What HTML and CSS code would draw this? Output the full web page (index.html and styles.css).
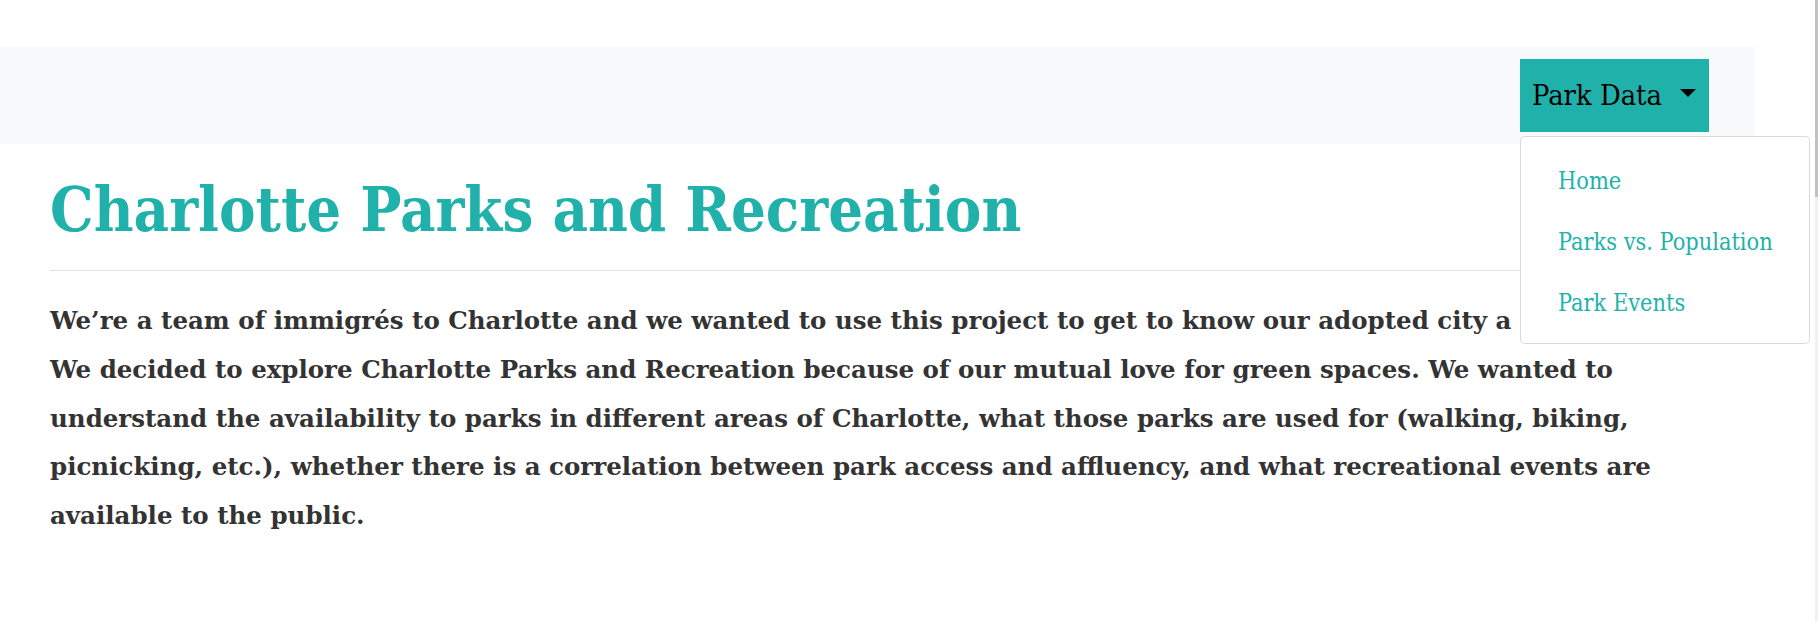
FILE: index.html
```html
<!DOCTYPE html>
<html lang="en">
<head>
<meta charset="utf-8">
<title>Charlotte Parks and Recreation</title>
<link rel="stylesheet" href="styles.css">
</head>
<body>
<div class="page">
  <div class="main">
    <nav class="navbar">
      <div class="dropdown">
        <button class="dropdown-toggle" type="button"><span class="toggle-label">Park Data</span><span class="caret"></span></button>
        <div class="dropdown-menu">
          <a class="dropdown-item" href="#">Home</a>
          <a class="dropdown-item" href="#">Parks vs. Population</a>
          <a class="dropdown-item" href="#">Park Events</a>
        </div>
      </div>
    </nav>
    <div class="content">
      <h1 class="title">Charlotte Parks and Recreation</h1>
      <hr class="rule">
      <p class="intro">We’re a team of immigrés to Charlotte and we wanted to use this project to get to know our adopted city a little better.<br>We decided to explore Charlotte Parks and Recreation because of our mutual love for green spaces. We wanted to understand the availability to parks in different areas of Charlotte, what those parks are used for (walking, biking, picnicking, etc.), whether there is a correlation between park access and affluency, and what recreational events are available to the public.</p>
    </div>
  </div>
  <div class="scrollbar"><div class="thumb"></div></div>
</div>
</body>
</html>
```
FILE: styles.css
```css
html, body {
  margin: 0;
  padding: 0;
  overflow: hidden;
}
body {
  font-family: "DejaVu Serif", serif;
  color: #333;
  background: #fff;
}
.page {
  display: flex;
  height: 100vh;
}
.main {
  flex: 1;
  min-width: 0;
  padding-top: 47px;
}
.navbar {
  width: 1755px;
  height: 97px;
  box-sizing: border-box;
  background: #f8f9fa;
  display: flex;
  justify-content: flex-end;
  align-items: flex-start;
  padding: 12px 46px 0 0;
}
.dropdown {
  position: relative;
}
.dropdown-toggle {
  width: 189px;
  height: 73px;
  box-sizing: border-box;
  display: flex;
  align-items: center;
  justify-content: space-between;
  padding: 0 13px 0 12px;
  background: #20b2aa;
  border: 0;
  border-radius: 0;
  color: #000;
  font-family: "DejaVu Serif Condensed", "DejaVu Serif", serif;
  font-size: 28.8px;
  line-height: 1.2;
}
.caret {
  width: 0;
  height: 0;
  border-left: 8px solid transparent;
  border-right: 8px solid transparent;
  border-top: 8px solid #000;
  margin-bottom: 5px;
}
.dropdown-menu {
  position: absolute;
  top: calc(100% + 4px);
  left: 0;
  width: 290px;
  box-sizing: border-box;
  background: #fff;
  border: 1px solid rgba(0, 0, 0, 0.15);
  border-radius: 5px;
  padding: 13px 0 10px;
  display: flex;
  flex-direction: column;
  z-index: 10;
}
.dropdown-item {
  display: block;
  height: 61px;
  line-height: 61px;
  padding-left: 37px;
  color: #20b2aa;
  text-decoration: none;
  font-family: "DejaVu Serif Condensed", "DejaVu Serif", serif;
  font-size: 23.3px;
  white-space: nowrap;
}
.content {
  width: 1755px;
  box-sizing: border-box;
  padding: 0 50px;
}
.title {
  margin: 30px 0 0;
  font-family: "DejaVu Serif Condensed", "DejaVu Serif", serif;
  font-size: 61px;
  line-height: 72px;
  font-weight: bold;
  color: #20b2aa;
}
.rule {
  margin: 24px 0 0;
  border: 0;
  border-top: 1px solid #e0e0e0;
  height: 0;
}
.intro {
  margin: 26px 0 0;
  font-size: 24.5px;
  line-height: 48.75px;
  font-weight: bold;
  color: #333;
}
.scrollbar {
  width: 3px;
  background: #f1f1f1;
}
.thumb {
  height: 197px;
  background: #c1c1c1;
}
```
